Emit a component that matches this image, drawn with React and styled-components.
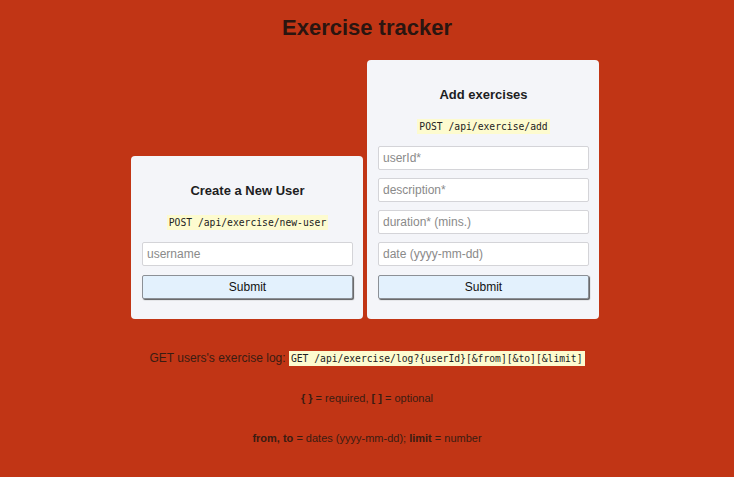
import React from "react";
import styled, { createGlobalStyle } from "styled-components";

const GlobalStyle = createGlobalStyle`
	html, body {
		margin: 0;
		padding: 0;
		background: #c13515;
		font-family: "Liberation Sans", Arial, sans-serif;
		color: #2b1710;
	}
`;

const Page = styled.div`
	width: 734px;
	min-height: 477px;
	display: flex;
	flex-direction: column;
	align-items: center;
`;

const Title = styled.h1`
	margin: 15px 0 0;
	font-size: 22px;
	line-height: 26px;
	font-weight: bold;
	color: #2a1510;
`;

const Forms = styled.div`
	display: flex;
	align-items: flex-end;
	gap: 4px;
	margin: 19px 4px 0 0;
`;

const Card = styled.form`
	box-sizing: border-box;
	width: 232px;
	padding: 27px 10px 20px 11px;
	background: #f4f5f9;
	border-radius: 4px;
	display: flex;
	flex-direction: column;
	align-items: stretch;
`;

const CardTitle = styled.h3`
	margin: 0;
	text-align: center;
	font-size: 13px;
	line-height: 16px;
	font-weight: bold;
	color: #1d1d1f;
`;

const Endpoint = styled.p`
	margin: 14px 0 11px;
	text-align: center;
	line-height: 16px;
`;

const Code = styled.code`
	font-family: "DejaVu Sans Mono", "Liberation Mono", monospace;
	font-size: 9.7px;
	line-height: 16px;
	padding: 2px 2px;
	background: #fdfbcf;
	color: #222;
`;

const Input = styled.input`
	box-sizing: border-box;
	width: 100%;
	height: 24px;
	margin: 0 0 8px;
	padding: 0 4px;
	border: 1px solid #d4d4d8;
	border-radius: 2px;
	background: #fff;
	font-family: "Liberation Sans", Arial, sans-serif;
	font-size: 12px;
	outline: none;

	&::placeholder {
		color: #8a8a8a;
	}
`;

const Submit = styled.button`
	box-sizing: border-box;
	width: 100%;
	height: 24px;
	margin: 1px 0 0;
	border: 1px solid #8c9096;
	border-radius: 2px;
	background: #e3f1fd;
	box-shadow: 1px 1px 1px #5d5d5d;
	font-family: "Liberation Sans", Arial, sans-serif;
	font-size: 12px;
	color: #111;
`;

const Note = styled.p`
	margin: ${({ $first }) => ($first ? "31px" : "23px")} 0 0;
	font-size: ${({ $first }) => ($first ? "12px" : "11px")};
	line-height: 17px;
	text-align: center;
	color: #3a1c12;

	b {
		font-weight: bold;
	}
`;

function App() {
	return (
		<Page>
			<GlobalStyle />
			<Title>Exercise tracker</Title>
			<Forms>
				<Card onSubmit={e => e.preventDefault()}>
					<CardTitle>Create a New User</CardTitle>
					<Endpoint>
						<Code>POST /api/exercise/new-user</Code>
					</Endpoint>
					<Input placeholder="username" />
					<Submit type="submit">Submit</Submit>
				</Card>
				<Card onSubmit={e => e.preventDefault()}>
					<CardTitle>Add exercises</CardTitle>
					<Endpoint>
						<Code>POST /api/exercise/add</Code>
					</Endpoint>
					<Input placeholder="userId*" />
					<Input placeholder="description*" />
					<Input placeholder="duration* (mins.)" />
					<Input placeholder="date (yyyy-mm-dd)" />
					<Submit type="submit">Submit</Submit>
				</Card>
			</Forms>
			<Note $first>
				GET users's exercise log:{" "}
				<Code>GET /api/exercise/log?{"{userId}"}[&amp;from][&amp;to][&amp;limit]</Code>
			</Note>
			<Note>
				<b>{"{ }"}</b> = required, <b>[ ]</b> = optional
			</Note>
			<Note>
				<b>from, to</b> = dates (yyyy-mm-dd); <b>limit</b> = number
			</Note>
		</Page>
	);
}

export default App;
